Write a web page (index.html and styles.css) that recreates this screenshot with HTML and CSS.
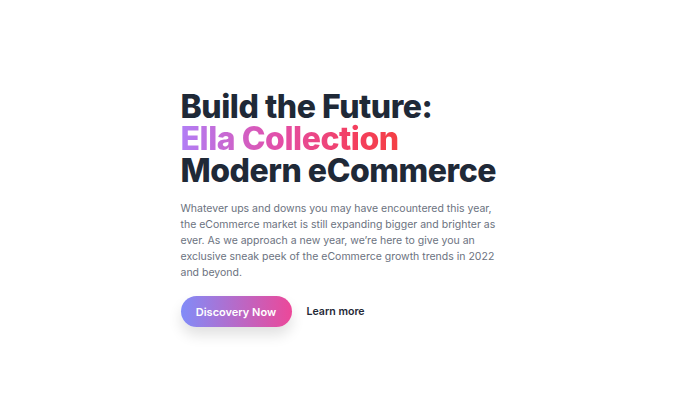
FILE: index.html
```html
<!DOCTYPE html>
<html lang="en">
<head>
<meta charset="utf-8">
<title>Ella Collection</title>
<link rel="stylesheet" href="styles.css">
</head>
<body>
<main class="hero">
  <section class="content">
    <h1 class="title">Build the Future:<br><span class="grad">Ella Collection</span><br>Modern eCommerce</h1>
    <p class="lead">Whatever ups and downs you may have encountered this year, the eCommerce market is still expanding bigger and brighter as ever. As we approach a new year, we’re here to give you an exclusive sneak peek of the eCommerce growth trends in 2022 and beyond.</p>
    <div class="actions">
      <a class="btn" href="#">Discovery Now</a>
      <a class="link" href="#">Learn more</a>
    </div>
  </section>
</main>
</body>
</html>
```
FILE: styles.css
```css
* { box-sizing: border-box; }
html, body { margin: 0; padding: 0; background: #fff; }
body { font-family: Inter, "Noto Sans", sans-serif; }
.hero {
  height: 400px;
  display: flex;
  justify-content: center;
  align-items: flex-start;
  padding-top: 91px;
}
.content { width: 320px; }
.title {
  margin: 0;
  font-family: Inter, sans-serif;
  font-weight: 800;
  font-size: 32px;
  line-height: 32px;
  letter-spacing: -0.45px;
  white-space: nowrap;
  color: #1f2937;
}
.grad {
  background: linear-gradient(90deg, #b17ef6 0%, #e34ea8 45%, #f43f5e 80%, #f43f44 100%);
  -webkit-background-clip: text;
  background-clip: text;
  color: transparent;
}
.lead {
  margin: 14px 0 0;
  font-size: 10.5px;
  line-height: 16px;
  color: #6b7280;
}
.actions {
  margin-top: 15px;
  display: flex;
  align-items: center;
  gap: 15px;
}
.btn {
  display: inline-flex;
  align-items: center;
  justify-content: center;
  height: 31px;
  width: 111px;
  border-radius: 16px;
  background: linear-gradient(90deg, #818cf8, #ec4899);
  color: #fff;
  font-size: 11px;
  font-weight: 600;
  text-decoration: none;
  box-shadow: 0 8px 14px rgba(0, 0, 0, 0.12);
}
.link {
  color: #1f2937;
  font-size: 10.6px;
  font-weight: 600;
  text-decoration: none;
}
```
